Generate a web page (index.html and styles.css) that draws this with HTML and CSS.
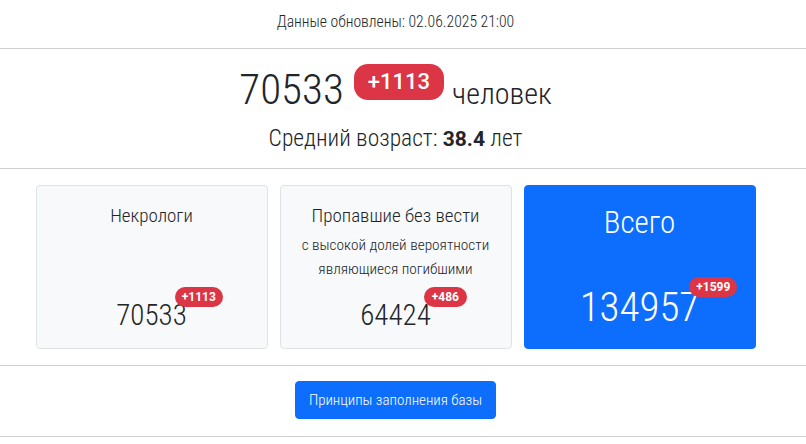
FILE: index.html
```html
<!DOCTYPE html>
<html lang="ru">
<head>
<meta charset="utf-8">
<title>Статистика</title>
<link rel="stylesheet" href="styles.css">
</head>
<body>
<header class="updated">Данные обновлены: 02.06.2025 21:00</header>

<section class="summary">
  <div class="total-line">
    <span class="total-num">70533</span>
    <span class="pill pill-big">+1113</span>
    <span class="total-unit">человек</span>
  </div>
  <div class="age">Средний возраст: <b>38.4</b> лет</div>
</section>

<section class="cards">
  <div class="card">
    <div class="card-title">Некрологи</div>
    <div class="card-num"><span class="num">70533<span class="pill pill-sm">+1113</span></span></div>
  </div>
  <div class="card">
    <div class="card-title">Пропавшие без вести</div>
    <div class="card-sub">с высокой долей вероятности<br>являющиеся погибшими</div>
    <div class="card-num"><span class="num">64424<span class="pill pill-sm pill-near">+486</span></span></div>
  </div>
  <div class="card card-primary">
    <div class="card-title card-title-big">Всего</div>
    <div class="card-num card-num-big"><span class="num">134957<span class="pill pill-sm">+1599</span></span></div>
  </div>
</section>

<section class="actions">
  <button class="btn" type="button">Принципы заполнения базы</button>
</section>
</body>
</html>
```
FILE: styles.css
```css
* { box-sizing: border-box; }
body {
  margin: 0;
  font-family: "Roboto Condensed", Roboto, sans-serif;
  font-weight: 300;
  color: #212529;
  background: #fff;
}
.updated,
.summary,
.cards,
.actions {
  padding-right: 15px;
}
.updated {
  height: 49px;
  border-bottom: 1px solid #d0d0d0;
  display: flex;
  align-items: center;
  justify-content: center;
  font-size: 15.7px;
  padding-bottom: 6px;
}
.summary {
  height: 120px;
  border-bottom: 1px solid #d0d0d0;
  text-align: center;
  padding-top: 11px;
}
.total-line {
  display: flex;
  justify-content: center;
  align-items: flex-start;
  gap: 8px;
  height: 60px;
}
.total-num {
  font-size: 43px;
  line-height: 58px;
  font-weight: 300;
  margin-right: 2px;
}
.total-unit {
  font-size: 30px;
  line-height: 40px;
  margin-top: 14px;
}
.pill {
  background: #dc3545;
  color: #fff;
  font-family: Roboto, sans-serif;
  font-weight: 700;
  border-radius: 999px;
  white-space: nowrap;
}
.pill-big {
  font-size: 22px;
  font-weight: 500;
  line-height: 36px;
  height: 36px;
  padding: 0 14px;
  margin-top: 4px;
  border-radius: 14px;
}
.age {
  font-size: 23.5px;
  line-height: 30px;
  margin-top: 3px;
}
.age b {
  font-family: Roboto, sans-serif;
  font-weight: 700;
  font-size: 21px;
}
.cards {
  height: 197px;
  border-bottom: 1px solid #d0d0d0;
  padding-top: 16px;
  display: grid;
  grid-template-columns: repeat(3, 232px);
  gap: 12px;
  justify-content: center;
}
.card {
  height: 164px;
  background: #f8f9fa;
  border: 1px solid #dee2e6;
  border-radius: 4px;
  padding: 16px 8px 0;
  display: flex;
  flex-direction: column;
  align-items: center;
  text-align: center;
}
.card-title {
  font-size: 19px;
  line-height: 28px;
}
.card-sub {
  font-size: 15.3px;
  line-height: 24px;
  margin-top: 3px;
}
.card-num {
  margin-top: auto;
  margin-bottom: 15px;
  font-size: 29px;
  line-height: 36px;
}
.num {
  position: relative;
  display: inline-block;
}
.pill-sm {
  position: absolute;
  left: calc(100% - 12px);
  top: -10px;
  font-size: 12px;
  line-height: 20px;
  height: 20px;
  padding: 0 7px;
}
.pill-near {
  left: calc(100% - 7px);
  padding: 0 8px;
}
.card-primary {
  background: #0d6efd;
  border-color: #0d6efd;
  color: #fff;
}
.card-title-big {
  font-size: 31px;
  line-height: 42px;
}
.card-num-big {
  font-size: 41px;
  line-height: 54px;
  margin-bottom: 14px;
}
.card-num-big .pill-sm {
  top: -3px;
  left: calc(100% - 10px);
}
.actions {
  height: 71px;
  border-bottom: 1px solid #d0d0d0;
  display: flex;
  justify-content: center;
  padding-top: 15px;
}
.btn {
  height: 38px;
  padding: 0 13px;
  background: #0d6efd;
  color: #fff;
  border: 1px solid #0d6efd;
  border-radius: 4px;
  font-family: "Roboto Condensed", Roboto, sans-serif;
  font-weight: 300;
  font-size: 15px;
}
```
